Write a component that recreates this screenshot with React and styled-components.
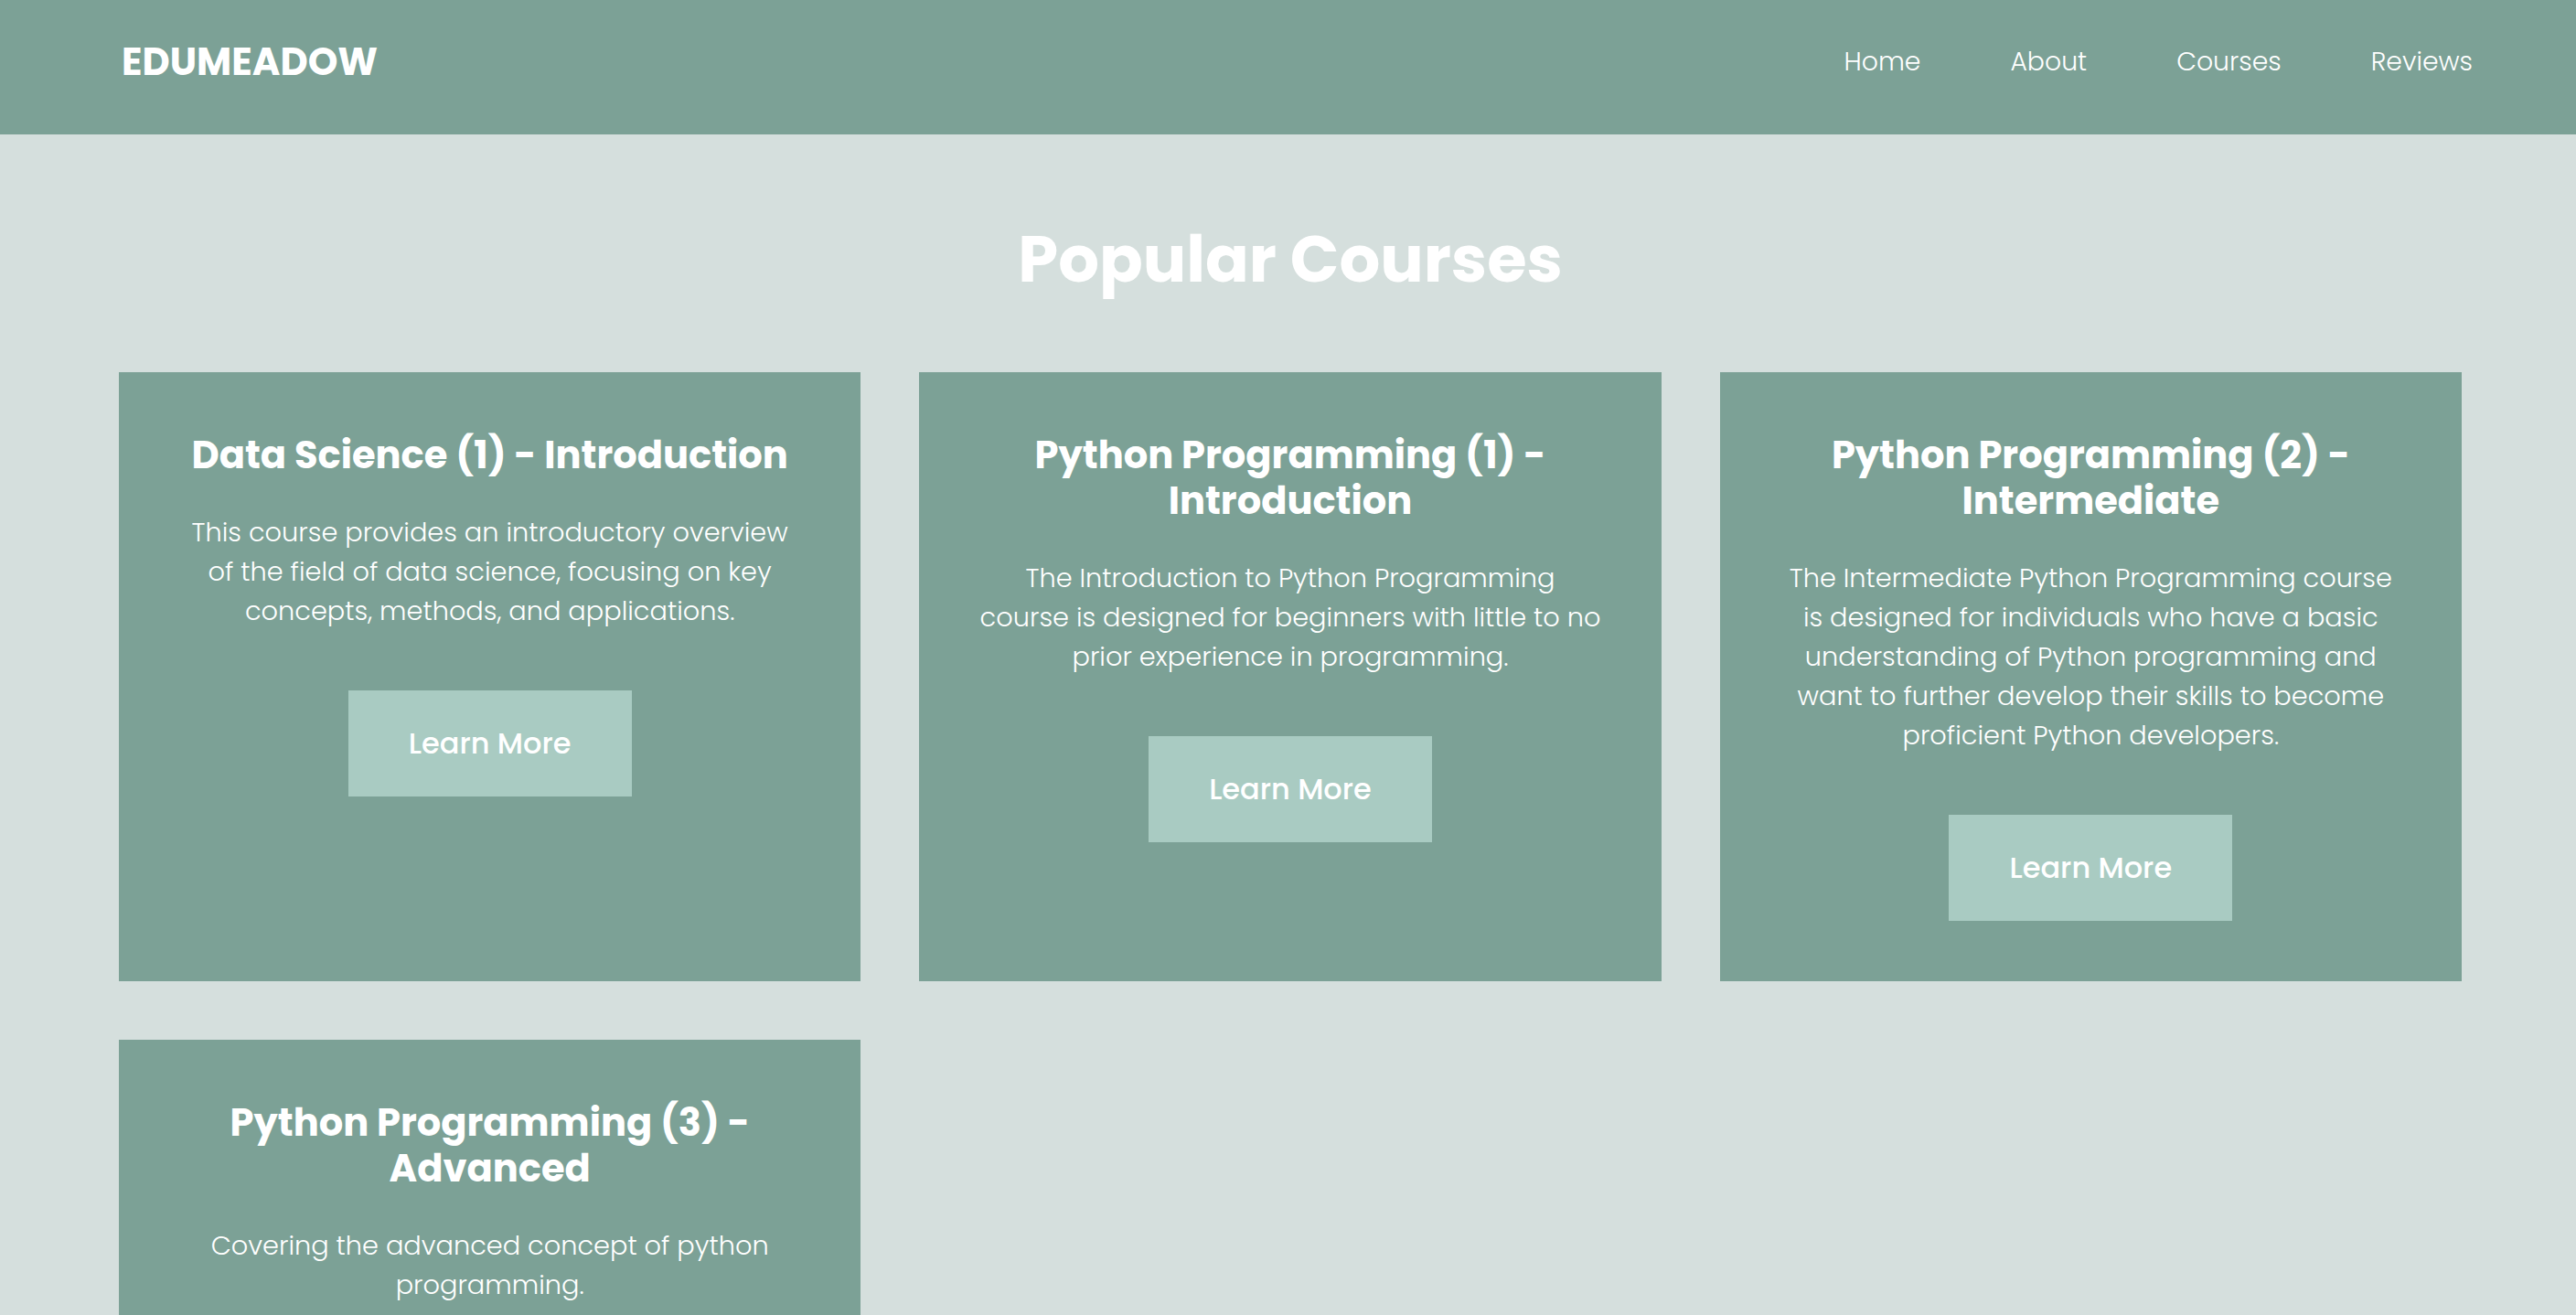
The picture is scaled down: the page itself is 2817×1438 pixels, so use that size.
import React from "react";
import styled, { createGlobalStyle } from "styled-components";

const GlobalStyle = createGlobalStyle`
  * { box-sizing: border-box; }
  html, body {
    margin: 0;
    padding: 0;
    background: #d5dfdd;
    font-family: Poppins, Inter, "Open Sans", sans-serif;
    color: #ffffff;
  }
`;

const Header = styled.header`
  height: 147px;
  background: #7ca196;
  display: flex;
  align-items: center;
  justify-content: space-between;
  padding: 0 113px 13px 133px;
`;

const Logo = styled.div`
  font-size: 41.6px;
  font-weight: 700;
  color: #ffffff;
`;

const Nav = styled.nav`
  display: flex;
  gap: 98px;
`;

const NavLink = styled.a`
  font-size: 28.3px;
  font-weight: 300;
  color: #ffffff;
  text-decoration: none;
`;

const Main = styled.main`
  padding: 97px 125px 80px 130px;
`;

const SectionTitle = styled.h1`
  margin: 0 0 83px;
  font-size: 70.4px;
  line-height: 80px;
  font-weight: 700;
  text-align: center;
  color: #ffffff;
`;

const Grid = styled.div`
  display: grid;
  grid-template-columns: repeat(3, 1fr);
  column-gap: 64px;
  row-gap: 64px;
`;

const Card = styled.div`
  background: #7ca196;
  padding: 66px 66px 66px;
  display: flex;
  flex-direction: column;
  align-items: center;
  text-align: center;
`;

const CardTitle = styled.h2`
  margin: 0;
  font-size: 41.6px;
  line-height: 50px;
  font-weight: 700;
  color: #ffffff;
`;

const CardText = styled.p`
  margin: 38px 0 0;
  font-size: 28.8px;
  line-height: 43px;
  font-weight: 300;
  color: #ffffff;
`;

const Button = styled.a`
  margin-top: 65px;
  display: inline-flex;
  align-items: center;
  justify-content: center;
  width: 310px;
  height: 116px;
  background: #a9cbc2;
  color: #ffffff;
  font-size: 32px;
  font-weight: 500;
  text-decoration: none;
`;

const courses = [
  {
    title: "Data Science (1) - Introduction",
    text: "This course provides an introductory overview of the field of data science, focusing on key concepts, methods, and applications.",
  },
  {
    title: "Python Programming (1) - Introduction",
    text: "The Introduction to Python Programming course is designed for beginners with little to no prior experience in programming.",
  },
  {
    title: "Python Programming (2) - Intermediate",
    text: "The Intermediate Python Programming course is designed for individuals who have a basic understanding of Python programming and want to further develop their skills to become proficient Python developers.",
  },
  {
    title: "Python Programming (3) - Advanced",
    text: "Covering the advanced concept of python programming.",
  },
];

export default function App() {
  return (
    <>
      <GlobalStyle />
      <Header>
        <Logo>EDUMEADOW</Logo>
        <Nav>
          <NavLink href="#">Home</NavLink>
          <NavLink href="#">About</NavLink>
          <NavLink href="#">Courses</NavLink>
          <NavLink href="#">Reviews</NavLink>
        </Nav>
      </Header>
      <Main>
        <SectionTitle>Popular Courses</SectionTitle>
        <Grid>
          {courses.map((c) => (
            <Card key={c.title}>
              <CardTitle>{c.title}</CardTitle>
              <CardText>{c.text}</CardText>
              <Button href="#">Learn More</Button>
            </Card>
          ))}
        </Grid>
      </Main>
    </>
  );
}
